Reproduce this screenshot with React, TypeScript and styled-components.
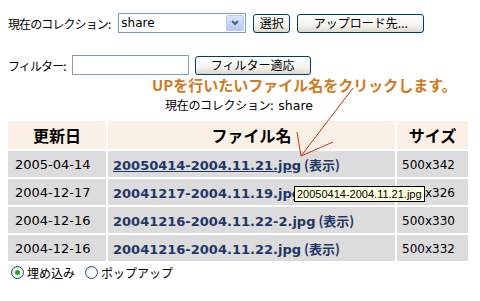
import styled, { createGlobalStyle } from 'styled-components';
import React from 'react';

const GlobalStyle = createGlobalStyle`
  body {
    margin: 0;
    background: #ffffff;
    font-family: 'Liberation Sans', 'Noto Sans CJK JP', sans-serif;
    font-size: 12px;
    color: #000;
  }
`;

const Page = styled.div`
  position: relative;
  width: 480px;
  height: 301px;
  padding: 0 8px;
  box-sizing: border-box;
  overflow: hidden;
`;

const Row = styled.div<{ top: number }>`
  display: flex;
  align-items: center;
  margin-top: ${(p) => p.top}px;
  height: 20px;
`;

const Label = styled.span<{ gap: number }>`
  font-family: 'Noto Sans CJK JP', sans-serif;
  font-size: 12px;
  letter-spacing: -0.9px;
  margin-right: ${(p) => p.gap}px;
  white-space: nowrap;
`;

const SelectBox = styled.div`
  display: flex;
  align-items: stretch;
  width: 128px;
  height: 20px;
  box-sizing: border-box;
  border: 1px solid #7f9db9;
  background: #fff;
  margin-right: 7px;
`;

const NativeSelect = styled.select`
  appearance: none;
  flex: 1;
  border: none;
  outline: none;
  background: transparent;
  font-family: 'DejaVu Sans', sans-serif;
  font-size: 12px;
  padding: 0 2px;
  color: #000;
`;

const ArrowBox = styled.span`
  width: 16px;
  margin: 1px;
  border-radius: 2px;
  border: 1px solid #b6cbf6;
  background: linear-gradient(#dce6fd, #b5c9f7);
  display: flex;
  align-items: center;
  justify-content: center;
`;

const XpButton = styled.button<{ w: number }>`
  width: ${(p) => p.w}px;
  height: 19px;
  box-sizing: border-box;
  border: 1px solid #003c74;
  border-radius: 3px;
  background: linear-gradient(#ffffff 0%, #f4f3ee 60%, #dcd9cc 100%);
  font-family: 'Noto Sans CJK JP', sans-serif;
  font-size: 12px;
  padding: 0;
  margin-right: 7px;
  color: #000;
  line-height: 16px;
`;

const TextInput = styled.input`
  width: 117px;
  height: 20px;
  box-sizing: border-box;
  border: 1px solid #7f9db9;
  margin-right: 6px;
  padding: 0 2px;
`;

const Hint = styled.div`
  margin: 1px 0 0 144px;
  font-family: 'Noto Sans CJK JP', sans-serif;
  font-weight: bold;
  font-size: 15px;
  line-height: 18px;
  color: #d07a22;
  white-space: nowrap;
`;

const Current = styled.div`
  margin: 3px 0 0 157px;
  font-family: 'Noto Sans CJK JP', sans-serif;
  font-size: 12px;
  letter-spacing: -0.3px;
  line-height: 16px;
  span {
    font-family: 'DejaVu Sans', sans-serif;
    letter-spacing: 0;
    font-size: 12.5px;
    margin-left: 5px;
  }
`;

const Table = styled.table`
  margin: 5px 0 0 -2px;
  border-collapse: separate;
  border-spacing: 2px;
`;

const HeadCell = styled.th<{ w: number }>`
  width: ${(p) => p.w}px;
  height: 28px;
  padding: 0;
  background: #faf0e6;
  font-family: 'Noto Sans CJK JP', sans-serif;
  font-size: 16px;
  font-weight: bold;
  text-align: center;
`;

const Cell = styled.td<{ pad: number }>`
  height: 26px;
  padding: 0 0 0 ${(p) => p.pad}px;
  background: #dcdcdc;
  font-family: 'DejaVu Sans', sans-serif;
  font-size: 13px;
  white-space: nowrap;
`;

const SizeText = styled.span`
  font-size: 12px;
`;

const FileLink = styled.a<{ underline?: boolean }>`
  color: #1f3768;
  font-weight: bold;
  text-decoration: ${(p) => (p.underline ? 'underline' : 'none')};
`;

const ViewLink = styled.span`
  color: #1f3768;
  font-family: 'Noto Sans CJK JP', sans-serif;
  font-weight: bold;
  font-size: 13px;
  margin-left: 3px;
`;

const RadioRow = styled.div`
  display: flex;
  align-items: center;
  margin: 0 0 0 3px;
  height: 18px;
  font-family: 'Noto Sans CJK JP', sans-serif;
  font-size: 12px;
`;

const RadioDot = styled.span<{ checked?: boolean }>`
  width: 13px;
  height: 13px;
  box-sizing: border-box;
  border-radius: 50%;
  border: 1px solid #1c5180;
  background: radial-gradient(circle at 60% 60%, #ffffff 30%, #d8d8d0 100%);
  display: inline-flex;
  align-items: center;
  justify-content: center;
  margin-right: 3px;
  &::after {
    content: '';
    width: 5px;
    height: 5px;
    border-radius: 50%;
    background: ${(p) => (p.checked ? '#21a121' : 'transparent')};
  }
`;

const RadioLabel = styled.span`
  margin-right: 10px;
`;

const Tooltip = styled.div`
  position: absolute;
  left: 294px;
  top: 186px;
  height: 16px;
  box-sizing: border-box;
  padding: 0 2px;
  background: #ffffe1;
  border: 1px solid #000;
  font-family: 'Liberation Sans', sans-serif;
  font-size: 11px;
  line-height: 14px;
  white-space: nowrap;
`;

const Overlay = styled.svg`
  position: absolute;
  left: 0;
  top: 0;
  pointer-events: none;
`;

const files = [
  { date: '2005-04-14', name: '20050414-2004.11.21.jpg', size: '500x342' },
  { date: '2004-12-17', name: '20041217-2004.11.19.jpg', size: '500x326' },
  { date: '2004-12-16', name: '20041216-2004.11.22-2.jpg', size: '500x330' },
  { date: '2004-12-16', name: '20041216-2004.11.22.jpg', size: '500x332' },
];

const App = () => {
  return (
    <Page>
      <GlobalStyle />
      <Row top={13}>
        <Label gap={8}>現在のコレクション:</Label>
        <SelectBox>
          <NativeSelect defaultValue="share">
            <option value="share">share</option>
          </NativeSelect>
          <ArrowBox>
            <svg width="8" height="6" viewBox="0 0 8 6">
              <path d="M1 1 L4 4 L7 1" stroke="#4d6185" strokeWidth="2" fill="none" />
            </svg>
          </ArrowBox>
        </SelectBox>
        <XpButton w={37}>選択</XpButton>
        <XpButton w={127}>アップロード先...</XpButton>
      </Row>
      <Row top={22}>
        <Label gap={6}>フィルター:</Label>
        <TextInput />
        <XpButton w={116}>フィルター適応</XpButton>
      </Row>
      <Hint>UPを行いたいファイル名をクリックします。</Hint>
      <Current>
        現在のコレクション:<span>share</span>
      </Current>
      <Table>
        <thead>
          <tr>
            <HeadCell w={98}>更新日</HeadCell>
            <HeadCell w={287}>ファイル名</HeadCell>
            <HeadCell w={71}>サイズ</HeadCell>
          </tr>
        </thead>
        <tbody>
          {files.map((f, i) => (
            <tr key={f.name}>
              <Cell pad={7}>{f.date}</Cell>
              <Cell pad={5}>
                <FileLink href="#" underline={i === 0}>
                  {f.name}
                </FileLink>
                <ViewLink>(表示)</ViewLink>
              </Cell>
              <Cell pad={5}>
                <SizeText>{f.size}</SizeText>
              </Cell>
            </tr>
          ))}
        </tbody>
      </Table>
      <RadioRow>
        <RadioDot checked />
        <RadioLabel>埋め込み</RadioLabel>
        <RadioDot />
        <span>ポップアップ</span>
      </RadioRow>
      <Tooltip>20050414-2004.11.21.jpg</Tooltip>
      <Overlay width="480" height="301">
        <g stroke="#cc3311" strokeWidth="1" fill="none">
          <line x1="353" y1="88" x2="301" y2="156" />
          <line x1="301" y1="156" x2="297" y2="132" />
          <line x1="301" y1="156" x2="333" y2="142" />
        </g>
      </Overlay>
    </Page>
  );
};

export default React.memo(App);
